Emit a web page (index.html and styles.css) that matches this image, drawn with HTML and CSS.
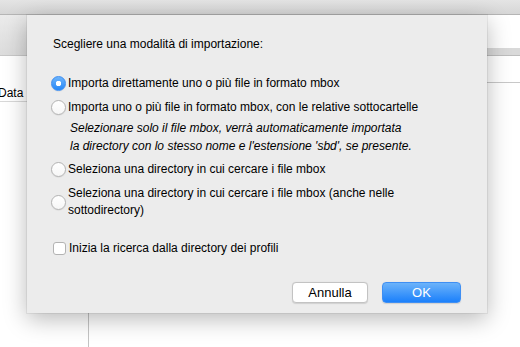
FILE: index.html
```html
<!DOCTYPE html>
<html lang="it">

<head>
    <meta charset="UTF-8">
    <meta name="viewport" content="width=device-width, initial-scale=1.0">
    <title>Importa mbox</title>
    <link rel="stylesheet" href="styles.css">
</head>

<body>
    <div class="titlebar"></div>

    <div class="workspace">
        <div class="pane-left">
            <div class="toolbar"></div>
            <div class="spacer"></div>
            <div class="col-header">Data</div>
        </div>
        <div class="pane-main">
            <div class="blank"></div>
            <div class="band"></div>
            <div class="row"></div>
        </div>
    </div>

    <!-- Foglio di dialogo sopra la finestra -->
    <div class="sheet">
        <p class="prompt">Scegliere una modalità di importazione:</p>

        <div class="options">
            <label class="option">
                <input type="radio" name="mode" checked>
                <span>Importa direttamente uno o più file in formato mbox</span>
            </label>
            <label class="option">
                <input type="radio" name="mode">
                <span>Importa uno o più file in formato mbox, con le relative sottocartelle</span>
            </label>
            <div class="hint">
                Selezionare solo il file mbox, verrà automaticamente importata<br>
                la directory con lo stesso nome e l'estensione 'sbd', se presente.
            </div>
            <label class="option">
                <input type="radio" name="mode">
                <span>Seleziona una directory in cui cercare i file mbox</span>
            </label>
            <label class="option wrap">
                <input type="radio" name="mode">
                <span>Seleziona una directory in cui cercare i file mbox (anche nelle sottodirectory)</span>
            </label>
        </div>

        <label class="check">
            <input type="checkbox">
            <span>Inizia la ricerca dalla directory dei profili</span>
        </label>

        <div class="buttons">
            <button class="btn">Annulla</button>
            <button class="btn btn-default">OK</button>
        </div>
    </div>
</body>

</html>
```

FILE: styles.css
```css
body {
    margin: 0;
    height: 347px;
    overflow: hidden;
    background-color: #fff;
    font-family: "Liberation Sans", Arial, sans-serif;
    font-size: 12px;
    color: #000;
}

.titlebar {
    height: 14px;
    background: linear-gradient(#e4e4e4, #d6d6d6);
    border-bottom: 1px solid #b5b5b5;
}

.workspace {
    display: flex;
    height: 332px;
}

.pane-left {
    width: 88px;
    border-right: 1px solid #c4c4c4;
}

.toolbar {
    height: 40px;
    background: linear-gradient(#ebebeb, #dcdcdc);
    border-bottom: 1px solid #c8c8c8;
}

.spacer {
    height: 30px;
}

.col-header {
    height: 15px;
    line-height: 15px;
    font-size: 12px;
    margin-left: -2px;
    border-bottom: 1px solid #d8d8d8;
}

.pane-main {
    flex: 1;
}

.blank {
    height: 33px;
}

.band {
    height: 7px;
    background-color: #d9d9d9;
    border-bottom: 1px solid #bdbdbd;
}

.row {
    height: 26px;
    border-bottom: 1px solid #c8c8c8;
}

.sheet {
    position: absolute;
    top: 15px;
    left: 27px;
    width: 460px;
    height: 298px;
    box-sizing: border-box;
    padding: 21px 26px 0 24px;
    background-color: #ececec;
    box-shadow: 0 6px 22px rgba(0, 0, 0, 0.28), 0 0 0 1px rgba(0, 0, 0, 0.06);
}

.prompt {
    margin: 0 0 23px 2px;
    line-height: 16px;
}

.options {
    display: flex;
    flex-direction: column;
}

.option {
    display: flex;
    align-items: center;
    gap: 2px;
    line-height: 16px;
    margin-bottom: 8px;
}

.option.wrap span {
    width: 330px;
    line-height: 17px;
}

.hint {
    font-style: italic;
    margin: -4px 0 6px 19px;
    line-height: 18px;
}

input[type="radio"] {
    appearance: none;
    margin: 0;
    width: 15px;
    height: 15px;
    flex: none;
    border-radius: 50%;
    border: 1px solid #b3b3b3;
    background: linear-gradient(#fff, #f6f6f6);
    box-sizing: border-box;
    box-shadow: 0 0.5px 1px rgba(0, 0, 0, 0.1);
}

input[type="radio"]:checked {
    border-color: #3b8df2;
    background: radial-gradient(circle, #fff 0 2.5px, transparent 3px), linear-gradient(#6db4fb, #2687f7);
}

.check {
    display: flex;
    align-items: center;
    gap: 3px;
    margin: 13px 0 0 2px;
    line-height: 16px;
}

input[type="checkbox"] {
    appearance: none;
    margin: 0;
    width: 13px;
    height: 13px;
    border-radius: 3px;
    border: 1px solid #b3b3b3;
    background-color: #fff;
    box-sizing: border-box;
}

.buttons {
    display: flex;
    justify-content: flex-end;
    gap: 14px;
    margin-top: 26px;
}

.btn {
    width: 76px;
    height: 21px;
    padding: 0;
    font-family: inherit;
    font-size: 13px;
    background-color: #fff;
    border: 1px solid #c3c3c3;
    border-radius: 4px;
    box-shadow: 0 0.5px 1px rgba(0, 0, 0, 0.12);
}

.btn-default {
    width: 79px;
    color: #fff;
    border-color: #3f8ff3;
    background: linear-gradient(#6cb3fa, #1b80fb);
}
```
